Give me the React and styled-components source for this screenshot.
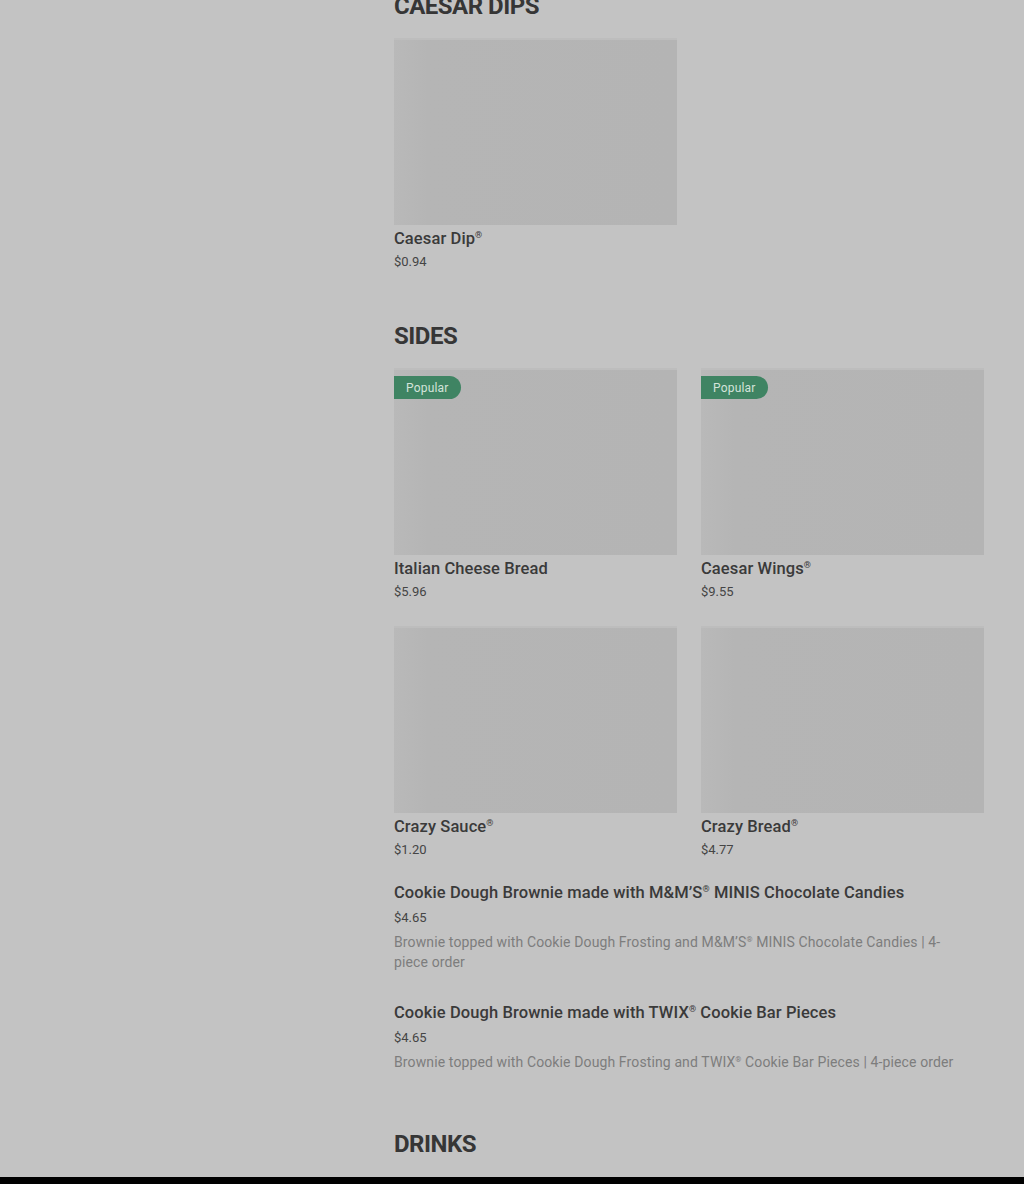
import React from "react";
import styled, { createGlobalStyle } from "styled-components";

const Global = createGlobalStyle`
  html, body { margin: 0; padding: 0; background: #c3c3c3; }
  body { height: 1184px; overflow: hidden; font-family: Roboto, "Liberation Sans", sans-serif; }
`;

const Page = styled.div`
  display: grid;
  grid-template-columns: 394px 590px;
  margin-top: -12px;
  height: 1196px;
  overflow: hidden;
  position: relative;
`;

const Sidebar = styled.aside``;

const Main = styled.main`
  display: flex;
  flex-direction: column;
  gap: 46px;
`;

const Section = styled.section`
  display: flex;
  flex-direction: column;
`;

const Heading = styled.h2`
  margin: 0 0 14px;
  font-family: Roboto, "Liberation Sans", sans-serif;
  font-weight: 700;
  font-size: 24px;
  line-height: 36px;
  letter-spacing: -0.5px;
  color: #363636;
`;

const Grid = styled.div`
  display: grid;
  grid-template-columns: 283px 283px;
  column-gap: 24px;
  row-gap: 24px;
`;

const Card = styled.div`
  display: flex;
  flex-direction: column;
`;

const Thumb = styled.div`
  position: relative;
  height: 187px;
  background: linear-gradient(90deg, #b9b9b9 0%, #b5b5b5 12%, #b4b4b4 100%);
  box-shadow: inset 0 2px 0 #bdbdbd;
  margin-bottom: 2px;
`;

const Badge = styled.span`
  position: absolute;
  left: 0;
  top: 8px;
  height: 23px;
  padding: 0 12px 0 12px;
  min-width: 43px;
  display: flex;
  align-items: center;
  background: #3f8463;
  color: #d3e3da;
  font-size: 12px;
  letter-spacing: 0.2px;
  border-radius: 0 12px 12px 0;
`;

const Name = styled.div`
  font-size: 16.5px;
  line-height: 24px;
  font-weight: 500;
  letter-spacing: 0.1px;
  color: #3a3a3a;
`;

const Price = styled.div`
  font-size: 13px;
  line-height: 20px;
  color: #454545;
  margin-top: ${(p) => (p.$list ? "3px" : "1px")};
`;

const Desc = styled.div`
  font-size: 14px;
  line-height: 20px;
  letter-spacing: 0.12px;
  color: #7d7d7d;
  margin-top: 4px;
  max-width: 570px;
`;

const Reg = styled.sup`
  font-size: 0.55em;
  line-height: 0;
  vertical-align: 0.7em;
`;

const List = styled.div`
  display: flex;
  flex-direction: column;
  gap: 21px;
  margin-top: 21px;
`;

const ListItem = styled.div`
  display: flex;
  flex-direction: column;
  padding-bottom: 8px;
`;

const Footer = styled.div`
  position: absolute;
  left: 0;
  right: 0;
  top: 1189px;
  height: 40px;
  background: #000;
`;

const R = () => <Reg>®</Reg>;

const ProductCard = ({ name, price, popular, reg }) => (
  <Card>
    <Thumb>{popular && <Badge>Popular</Badge>}</Thumb>
    <Name>
      {name}
      {reg && <R />}
    </Name>
    <Price>{price}</Price>
  </Card>
);

export default function App() {
  return (
    <>
      <Global />
      <Page>
        <Sidebar />
        <Main>
          <Section>
            <Heading>CAESAR DIPS</Heading>
            <Grid>
              <ProductCard name="Caesar Dip" reg price="$0.94" />
            </Grid>
          </Section>
          <Section>
            <Heading>SIDES</Heading>
            <Grid>
              <ProductCard name="Italian Cheese Bread" price="$5.96" popular />
              <ProductCard name="Caesar Wings" reg price="$9.55" popular />
              <ProductCard name="Crazy Sauce" reg price="$1.20" />
              <ProductCard name="Crazy Bread" reg price="$4.77" />
            </Grid>
            <List>
              <ListItem>
                <Name>
                  Cookie Dough Brownie made with M&amp;M’S<R /> MINIS Chocolate Candies
                </Name>
                <Price $list>$4.65</Price>
                <Desc>
                  Brownie topped with Cookie Dough Frosting and M&amp;M’S<R /> MINIS Chocolate Candies | 4-piece order
                </Desc>
              </ListItem>
              <ListItem>
                <Name>
                  Cookie Dough Brownie made with TWIX<R /> Cookie Bar Pieces
                </Name>
                <Price $list>$4.65</Price>
                <Desc>
                  Brownie topped with Cookie Dough Frosting and TWIX<R /> Cookie Bar Pieces | 4-piece order
                </Desc>
              </ListItem>
            </List>
          </Section>
          <Section>
            <Heading>DRINKS</Heading>
          </Section>
        </Main>
        <Footer />
      </Page>
    </>
  );
}
